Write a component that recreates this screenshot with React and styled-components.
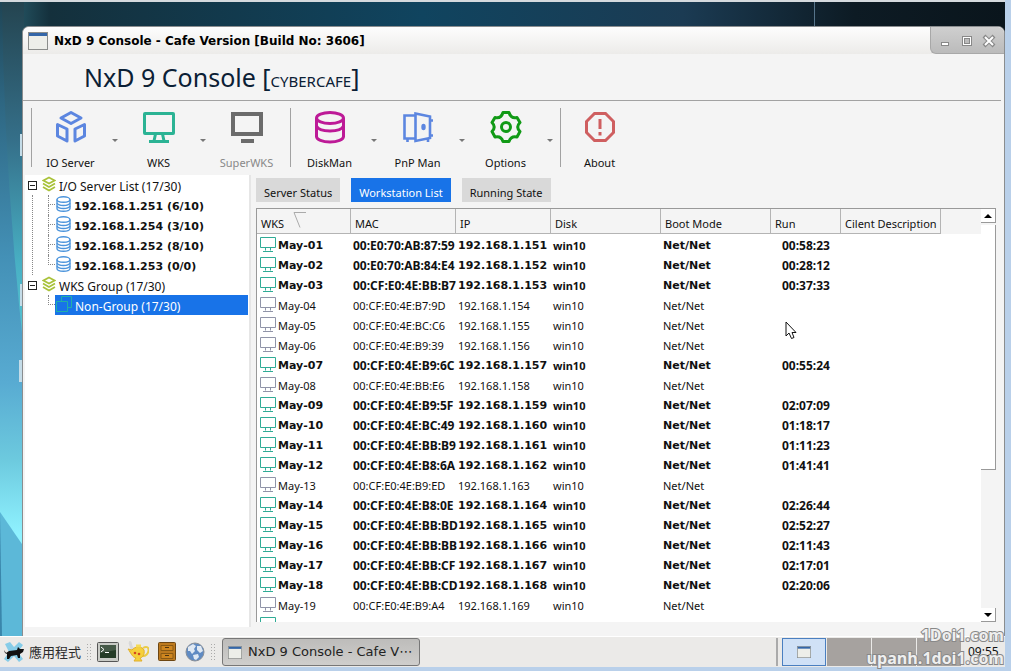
import styled, { createGlobalStyle } from "styled-components";

const GlobalStyle = createGlobalStyle`
  *,
  *::before,
  *::after {
    box-sizing: border-box;
  }

  html,
  body,
  #root {
    height: 100%;
    margin: 0;
  }

  body {
    overflow: hidden;
    background: #b9d0ea;
    font-family: "Noto Sans", sans-serif;
    font-size: 11px;
    color: #111;
  }

  button {
    margin: 0;
    padding: 0;
    border: 0;
    background: none;
    font: inherit;
    color: inherit;
  }

  svg {
    display: block;
    flex: none;
  }
`;

const Screen = styled.div`
  display: flex;
  flex-direction: column;
  height: 100%;
  padding-bottom: 4px;
  position: relative;
`;

const Desktop = styled.div`
  flex: 1;
  min-height: 0;
  margin-right: 6px;
  padding: 24px 0 0 22px;
  display: flex;
  position: relative;
  border-top: 2px solid #d5dade;
  background: linear-gradient(90deg, #2c6474 0%, #14303c 5%, #10445f 42%, #1b3b53 68%, #0d1b24 85%, #0a151c 100%);
`;

const Wallpaper = styled.svg`
  position: absolute;
  left: 0;
  top: 0;
  width: 24px;
  height: 100%;
`;

const SkyLine = styled.span`
  position: absolute;
  left: 81%;
  top: 0;
  width: 1px;
  height: 24px;
  background: #56748a;
`;

const Window = styled.main`
  flex: 1;
  min-width: 0;
  display: flex;
  flex-direction: column;
  position: relative;
  overflow: hidden;
  border: 1px solid #8a8d8f;
  border-bottom: 0;
  border-radius: 7px 7px 0 0;
  background: #f4f4f4;
`;

const TitleBar = styled.header`
  display: flex;
  align-items: center;
  height: 27px;
  padding-left: 5px;
  background: linear-gradient(#fdfdfd, #ecebe9);
`;

const Title = styled.h1`
  flex: 1;
  margin: 0 0 0 6px;
  font: bold 12px/16px "DejaVu Sans", sans-serif;
  color: #000;
`;

const WindowButtons = styled.div`
  display: flex;
  align-self: stretch;
  align-items: center;
  justify-content: center;
  gap: 6px;
  width: 74px;
  padding: 2px 2px 0 0;
  border-left: 1px solid #a8a8a8;
  border-bottom: 1px solid #a8a8a8;
  border-bottom-left-radius: 6px;
  background: linear-gradient(#cfcfcf, #bbb);
`;

const Banner = styled.div`
  height: 47px;
  margin-right: 3px;
  padding-left: 61px;
  border-bottom: 1px solid #a2a2a2;
  font: 25px/46px "Noto Sans", sans-serif;
  color: #0b2035;

  small {
    font-size: 15px;
  }
`;

const Toolbar = styled.nav`
  display: flex;
  height: 74px;
  padding: 7px 0 8px 8px;
`;

const ToolGroup = styled.div`
  display: flex;
  padding-right: 5px;
  border-left: 1px solid #a2a2a2;
`;

const Tool = styled.button`
  display: flex;
  flex-direction: column;
  align-items: center;
  gap: 13px;
  width: 77px;
  padding-top: 2px;
  line-height: 12px;
  white-space: nowrap;
  color: #111;

  &:disabled {
    color: #888;
  }
`;

const ToolMenu = styled.button`
  width: 11px;
  display: flex;
  align-items: center;
  justify-content: center;
  padding-top: 6px;

  &::after {
    content: "";
    border: 3px solid transparent;
    border-top-color: #777;
    border-bottom: 0;
  }
`;

const Body = styled.div`
  flex: 1;
  display: flex;
  min-height: 0;
`;

const Tree = styled.aside`
  width: 226px;
  flex: none;
  margin: 0 5px 9px 2px;
  border-right: 2px solid #e6e6e6;
  background: #fff;
`;

const TreeItem = styled.div`
  display: flex;
  flex: 1;
  align-items: center;
  height: 20px;
  margin: 0 1px 0 ${(props) => (props.$leaf ? 0 : 3)}px;
  padding-left: ${(props) => (props.$leaf ? 1 : 0)}px;
  white-space: nowrap;
  font: ${(props) => (props.$bold ? 'bold 11px "DejaVu Sans"' : '12px "Noto Sans"')}, sans-serif;
  color: ${(props) => (props.$selected ? "#fff" : "#111")};
  background: ${(props) => (props.$selected ? "#1873e8" : "none")};

  svg {
    margin-top: -3px;
  }

  span {
    margin-left: 3px;
    padding-top: 2px;
  }
`;

const TreeBranch = styled.div`
  margin-left: 7px;
  border-left: ${(props) => (props.$open ? "1px dotted #888" : "1px solid transparent")};
`;

const Leaf = styled.div`
  display: flex;
  padding-left: 15px;
`;

const Stub = styled.i`
  width: 7px;

  &::before,
  &::after {
    content: "";
    display: block;
    height: 10px;
    border-left: 1px dotted #888;
  }

  &::before {
    border-bottom: 1px dotted #888;
  }

  ${Leaf}:last-child &::after {
    border: 0;
  }
`;

const Twisty = styled.button`
  width: 9px;
  height: 9px;
  margin-right: 5px;
  border: 1px solid #222;
  display: grid;
  place-items: center;

  &::after {
    content: "";
    width: 5px;
    height: 1px;
    background: #222;
  }
`;

const Content = styled.section`
  flex: 1;
  min-width: 0;
  display: flex;
  flex-direction: column;
  padding: 3px 8px 14px 0;
`;

const Tabs = styled.div`
  display: flex;
  gap: 11px;
  margin-bottom: 6px;
`;

const Tab = styled.button`
  height: 24px;
  padding: 6px 8px 0;
  line-height: 16px;
  white-space: nowrap;
  color: ${(props) => (props.$active ? "#fff" : "#111")};
  background: ${(props) => (props.$active ? "#1873e8" : "#d9d9d9")};
`;

const ListBox = styled.div`
  flex: 1;
  min-height: 0;
  display: flex;
  border-top: 1px solid #999;
  border-left: 1px solid #999;
  background: #fff;
`;

const ListBody = styled.div`
  flex: 1;
  min-width: 0;
  overflow: hidden;
`;

const Table = styled.table`
  width: 100%;
  table-layout: fixed;
  border-collapse: separate;
  border-spacing: 0;
`;

const HeadCell = styled.th`
  width: ${(props) => (props.$width ? props.$width + "px" : "auto")};
  height: 25px;
  padding: 5px 0 0 4px;
  text-align: left;
  font-weight: normal;
  line-height: 14px;
  white-space: nowrap;
  background: #f4f4f4;
  border-right: ${(props) => (props.$width ? "1px solid #b4b4b4" : "0")};
  border-bottom: ${(props) => (props.$width ? "1px solid #b4b4b4" : "0")};

  svg {
    display: inline-block;
    margin: -9px 0 0 9px;
    vertical-align: middle;
  }
`;

const boldFonts = {
  wide: '11px "DejaVu Sans", sans-serif',
  digits: '12px "Noto Sans", sans-serif',
  plain: '11px "Noto Sans", sans-serif',
};

const Cell = styled.td`
  height: 20px;
  padding: 4px 0 0 ${(props) => props.$indent ?? 2}px;
  font: ${(props) => (props.$online ? "bold " + boldFonts[props.$face] : boldFonts.plain)};
  line-height: 16px;
  white-space: nowrap;
`;

const Station = styled.span`
  display: flex;
  align-items: center;
  gap: 2px;
  height: 16px;

  svg {
    margin-top: -4px;
  }
`;

const Scroll = styled.div`
  width: 15px;
  display: flex;
  flex-direction: column;
  background: #f4f4f4;
`;

const ScrollButton = styled.button`
  height: 14px;
  display: grid;
  place-items: center;
  background: #fff;
  border-right: 1px solid #999;
  border-bottom: 1px solid #999;
`;

const ScrollTrack = styled.div`
  flex: 1;
  padding-top: 2px;
`;

const ScrollThumb = styled.div`
  height: 64%;
  background: #fff;
  border-right: 1px solid #999;
  border-bottom: 1px solid #999;
`;

const Taskbar = styled.footer`
  height: 31px;
  margin-right: 6px;
  padding-left: 3px;
  display: flex;
  align-items: center;
  border-top: 1px solid #fff;
  background: #ebeae8;
  color: #2b2b2b;
`;

const AppsButton = styled.button`
  display: flex;
  align-items: center;
  gap: 4px;
  font: 13px/20px "Noto Sans CJK TC", sans-serif;
  white-space: nowrap;
`;

const Grip = styled.span`
  width: 5px;
  height: 18px;
  margin: 0 6px 0 5px;
  background: radial-gradient(circle, #aaa 1px, transparent 1px) 0 0 / 3px 3px;
`;

const Launcher = styled.button`
  margin-right: 8px;
`;

const TaskButton = styled.button`
  display: flex;
  align-items: center;
  gap: 6px;
  width: 198px;
  height: 28px;
  margin-left: 1px;
  padding-left: 5px;
  border: 1px solid #777;
  border-radius: 3px;
  background: linear-gradient(#bdbcba, #cfcecc);
  font: 13px/20px "DejaVu Sans", sans-serif;
  white-space: nowrap;
  color: #222;
`;

const Workspaces = styled.div`
  display: flex;
  gap: 1px;
  height: 28px;
  margin-left: auto;
  padding-left: 4px;
  border-left: 2px solid #aaa;
`;

const Workspace = styled.button`
  width: 44px;
  display: grid;
  place-items: center;
  border: ${(props) => (props.$active ? "1px solid #4a7fc0" : "0")};
  background: ${(props) => (props.$active ? "#d0e1f6" : "#a6a29f")};
`;

const Clock = styled.time`
  width: 44px;
  padding-left: 7px;
  font: 12px/16px "Noto Sans", sans-serif;
  color: #111;
`;

const Watermark = styled.div`
  position: absolute;
  right: 7px;
  bottom: 1px;
  text-align: right;
  font: bold 16px/23px "Open Sans", sans-serif;
  color: #eee;
  -webkit-text-stroke: 2px #888;
  paint-order: stroke fill;
  pointer-events: none;
`;

const Pointer = styled.svg`
  position: absolute;
  left: 785px;
  top: 321px;
`;

function DesktopArt() {
  return (
    <Wallpaper viewBox="0 0 24 634" preserveAspectRatio="none">
      <defs>
        <linearGradient id="sea" x2="0" y2="1">
          <stop offset="0" stopColor="#1f4555" />
          <stop offset=".15" stopColor="#2d6580" />
          <stop offset=".4" stopColor="#4390b6" />
          <stop offset=".6" stopColor="#58abd2" />
          <stop offset=".72" stopColor="#6cc9de" />
          <stop offset=".84" stopColor="#8ff2ff" />
        </linearGradient>
        <linearGradient id="beam" x2="0" y2="1">
          <stop offset="0" stopColor="#244450" />
          <stop offset=".4" stopColor="#35708a" />
          <stop offset=".75" stopColor="#48b0c4" />
          <stop offset="1" stopColor="#5cc9d6" />
        </linearGradient>
      </defs>
      <path d="M0 0H24V634H0Z" fill="url(#sea)" />
      <path d="M2 0H24V350Q4 170 2 0Z" fill="url(#beam)" />
      <path d="M0 510 24 545V634H0Z" fill="#5cb8d8" />
      <path d="M0 510 2 634H0Z" fill="#3a86ab" />
      <path d="M20 132H24V154H20ZM20 282H24V304H20ZM19 358H24V380H19Z" fill="#c4dce8" />
    </Wallpaper>
  );
}

function CubesIcon() {
  return (
    <svg width="32" height="34" viewBox="0 0 32 34" fill="none" stroke="#5c86e0" strokeWidth="3" strokeLinejoin="round">
      <path d="M16 2.5 26 8 16 13.5 6 8Z" />
      <path d="M2.5 14.5 12 19V31L2.5 26Z" />
      <path d="M29.5 14.5 20 19V31L29.5 26Z" />
    </svg>
  );
}

function MonitorIcon() {
  return (
    <svg width="34" height="34" viewBox="0 0 34 34" fill="none" stroke="#2bb394" strokeWidth="3">
      <rect x="2.5" y="3.5" width="29" height="20" rx="0.5" />
      <path d="M13.5 24 12 31M20.5 24 22 31M7 31.5H27" />
    </svg>
  );
}

function SuperIcon() {
  return (
    <svg width="34" height="34" viewBox="0 0 34 34" fill="#6b6b6b">
      <path fillRule="evenodd" d="M1 2H33V26H1ZM5 6V22H29V6Z" />
      <path d="M11 29H24V33H11Z" />
    </svg>
  );
}

function DiskIcon() {
  return (
    <svg width="34" height="34" viewBox="0 0 34 34" fill="none" stroke="#bd1a97" strokeWidth="3">
      <ellipse cx="17" cy="8" rx="13.5" ry="5.5" />
      <path d="M3.5 8V26.5C3.5 29.5 9.5 32 17 32S30.5 29.5 30.5 26.5V8" />
      <path d="M3.5 16C5 19.5 10 21 17 21S29 19.5 30.5 16" />
    </svg>
  );
}

function DoorIcon() {
  return (
    <svg width="34" height="34" viewBox="0 0 34 34" fill="none" stroke="#5c86e0" strokeWidth="2.6">
      <path d="M14 5.5H3.5V28.5H14M14.5 3.5 29 6.5V28L14.5 31ZM6.5 29V32M27 29V32M29 10.5H32M29 25.5H32" />
      <ellipse cx="22.5" cy="17" rx="2.2" ry="3.2" fill="#5c86e0" stroke="none" />
    </svg>
  );
}

function GearIcon() {
  return (
    <svg width="34" height="34" viewBox="0 0 34 34" fill="none" stroke="#119a16" strokeWidth="3" strokeLinejoin="round">
      <path d="M14 2.5H20Q22 9 28 7.5L31 12.5Q26.5 17 31 21.5L28 27Q22 25.5 20 31.5H14Q12 25.5 6 27L3 21.5Q7.5 17 3 12.5L6 7.5Q12 9 14 2.5Z" />
      <circle cx="17" cy="17" r="4.5" />
    </svg>
  );
}

function AlertIcon() {
  return (
    <svg width="34" height="34" viewBox="0 0 34 34" fill="none" stroke="#cf5f60" strokeWidth="3">
      <path d="M11.5 3.5H22.5L30.5 11.5V22.5L22.5 30.5H11.5L3.5 22.5V11.5Z" />
      <path d="M17 9V19M17 22V25.5" />
    </svg>
  );
}

function LayersIcon() {
  return (
    <svg width="14" height="16" viewBox="0 0 14 16" fill="none" stroke="#a9c23a" strokeWidth="1.7">
      <path d="M7 1.5 12.5 4.5 7 7.5 1.5 4.5Z" />
      <path d="M1 7.5 7 11 13 7.5M1 11 7 14.5 13 11" />
    </svg>
  );
}

function ServerIcon() {
  return (
    <svg width="15" height="16" viewBox="0 0 15 16" fill="none" stroke="#4d95dc" strokeWidth="1.4">
      <ellipse cx="7.5" cy="3.5" rx="6.5" ry="2.7" />
      <path d="M1 3.5V12.5C1 14.2 4 15.2 7.5 15.2S14 14.2 14 12.5V3.5" />
      <path d="M1 7C2 9 5 9.5 7.5 9.5S13 9 14 7M1 10C2 12 5 12.5 7.5 12.5S13 12 14 10" />
    </svg>
  );
}

function GroupIcon() {
  return (
    <svg width="16" height="16" viewBox="0 0 16 16" fill="none" stroke="#20b0a8">
      <path d="M.5 5.5H11.5V15.5H.5ZM5.5 5V.5H15.5V11.5H12" />
    </svg>
  );
}

function StationIcon({ online }) {
  const color = online ? "#2fab95" : "#9094a8";

  return (
    <svg width="16" height="16" viewBox="0 0 16 16" fill="none" stroke={color}>
      <path d="M.5 1.5H15.5V11.5H.5ZM5.5 12V14.5M10.5 12V14.5M3 15.5H13" />
    </svg>
  );
}

function WindowIcon({ width = 16, height = 14 }) {
  return (
    <svg width={width} height={height} viewBox="0 0 20 18" preserveAspectRatio="none">
      <rect x=".5" y=".5" width="19" height="17" fill="#edeee9" stroke="#8b8d8b" />
      <path d="M1 1H19V4H1Z" fill="#3466a8" />
    </svg>
  );
}

function MouseIcon() {
  return (
    <svg width="22" height="22" viewBox="0 0 22 22">
      <path d="M2 3 7 1 11 6 16 1 20 4 15 11 20 18 16 21 11 15 5 21 1 18 6 11Z" fill="#86cce8" />
      <path d="M1 9 3 12 6 10 14 9 15 6 17 8 21 8 20 11 17 13 17 17H15L14 14 8 15 6 18H4L4 13 2 12Z" fill="#111" />
    </svg>
  );
}

function TerminalIcon() {
  return (
    <svg width="22" height="22" viewBox="0 0 22 22">
      <rect x=".5" y="1.5" width="21" height="19" rx="1" fill="#c9cbc6" stroke="#555" />
      <path d="M3 4H19V17H3Z" fill="#253c27" />
      <path d="M4 6 7 8.5 4 11M8 11.5H12" fill="none" stroke="#fff" />
      <path d="M3 4H19V9L3 12Z" fill="#fff" opacity=".15" />
    </svg>
  );
}

function LampIcon() {
  return (
    <svg width="22" height="22" viewBox="0 0 22 22">
      <path d="M2 1C5 2 2 5 6 8" fill="none" stroke="#d8d8d8" strokeWidth="3" />
      <path d="M16 7C24 2 23 16 15 15" fill="none" stroke="#eacb45" strokeWidth="2" />
      <path d="M1 8 5 9C8 5 15 5 17 9 18 14 15 17 13 17L15 20H7L9 17C5 16 4 12 1 8Z" fill="#f6d03a" stroke="#e0ae2c" />
      <circle cx="8" cy="12" r="1.3" fill="#d44b20" />
      <circle cx="12" cy="13" r="1.3" fill="#d44b20" />
      <path d="M9 5H14" stroke="#f5da55" strokeWidth="3" />
    </svg>
  );
}

function CabinetIcon() {
  return (
    <svg width="20" height="22" viewBox="0 0 20 22">
      <rect x="1.5" y="1.5" width="17" height="18" rx="1" fill="#bd7a1f" stroke="#6d4612" />
      <path d="M4 4.5H16V9.5H4ZM4 12.5H16V17.5H4Z" fill="#cf861f" stroke="#8a5a14" />
      <path d="M8 6.5H12M8 14.5H12" stroke="#50340f" />
    </svg>
  );
}

function GlobeIcon() {
  return (
    <svg width="20" height="20" viewBox="0 0 20 20">
      <circle cx="10" cy="10" r="9" fill="#608bc3" stroke="#888f98" />
      <path d="M3 5 8 2 11 4 9 7 10 9 7 12 5 9 3 9ZM12 4 16 4 18 9 15 11 12 8ZM8 13 13 12 14 15 11 18 9 17Z" fill="#e0e9f3" />
    </svg>
  );
}

const ioTools = [
  { label: "IO Server", icon: <CubesIcon />, menu: true },
  { label: "WKS", icon: <MonitorIcon />, menu: true },
  { label: "SuperWKS", icon: <SuperIcon />, disabled: true },
];

const manageTools = [
  { label: "DiskMan", icon: <DiskIcon />, menu: true },
  { label: "PnP Man", icon: <DoorIcon />, menu: true },
  { label: "Options", icon: <GearIcon />, menu: true },
];

const aboutTools = [{ label: "About", icon: <AlertIcon /> }];

const servers = [
  "192.168.1.251 (6/10)",
  "192.168.1.254 (3/10)",
  "192.168.1.252 (8/10)",
  "192.168.1.253 (0/0)",
];

const columns = [
  ["WKS", 94],
  ["MAC", 105],
  ["IP", 95],
  ["Disk", 110],
  ["Boot Mode", 110],
  ["Run", 70],
  ["Cilent Description", 100],
  ["", 0],
];

const stations = [
  ["00:E0:70:AB:87:59", "00:58:23"],
  ["00:E0:70:AB:84:E4", "00:28:12"],
  ["00:CF:E0:4E:BB:B7", "00:37:33"],
  ["00:CF:E0:4E:B7:9D"],
  ["00:CF:E0:4E:BC:C6"],
  ["00:CF:E0:4E:B9:39"],
  ["00:CF:E0:4E:B9:6C", "00:55:24"],
  ["00:CF:E0:4E:BB:E6"],
  ["00:CF:E0:4E:B9:5F", "02:07:09"],
  ["00:CF:E0:4E:BC:49", "01:18:17"],
  ["00:CF:E0:4E:BB:B9", "01:11:23"],
  ["00:CF:E0:4E:B8:6A", "01:41:41"],
  ["00:CF:E0:4E:B9:ED"],
  ["00:CF:E0:4E:B8:0E", "02:26:44"],
  ["00:CF:E0:4E:BB:BD", "02:52:27"],
  ["00:CF:E0:4E:BB:BB", "02:11:43"],
  ["00:CF:E0:4E:BB:CF", "02:17:01"],
  ["00:CF:E0:4E:BB:CD", "02:20:06"],
  ["00:CF:E0:4E:B9:A4"],
];

function Tools({ items }) {
  return (
    <ToolGroup>
      {items.map((item) => [
        <Tool key={item.label} disabled={item.disabled}>
          {item.icon}
          <span>{item.label}</span>
        </Tool>,
        item.menu && <ToolMenu key={item.label + "-menu"} aria-label={item.label + " menu"} />,
      ])}
    </ToolGroup>
  );
}

function ServerTree() {
  return (
    <Tree>
      <TreeItem>
        <Twisty aria-label="Collapse I/O Server List" />
        <LayersIcon />
        <span>I/O Server List (17/30)</span>
      </TreeItem>
      <TreeBranch $open>
        {servers.map((server) => (
          <Leaf key={server}>
            <Stub />
            <TreeItem $leaf $bold>
              <ServerIcon />
              <span>{server}</span>
            </TreeItem>
          </Leaf>
        ))}
      </TreeBranch>
      <TreeItem>
        <Twisty aria-label="Collapse WKS Group" />
        <LayersIcon />
        <span>WKS Group (17/30)</span>
      </TreeItem>
      <TreeBranch>
        <Leaf>
          <Stub />
          <TreeItem $leaf $selected>
            <GroupIcon />
            <span>Non-Group (17/30)</span>
          </TreeItem>
        </Leaf>
      </TreeBranch>
    </Tree>
  );
}

function StationRow({ index, mac, run }) {
  const online = Boolean(run);

  return (
    <tr>
      <Cell $online={online} $face="wide" $indent={3}>
        <Station>
          <StationIcon online={online} />
          May-{String(index + 1).padStart(2, "0")}
        </Station>
      </Cell>
      <Cell $online={online} $face="digits">{mac}</Cell>
      <Cell $online={online} $face="wide">192.168.1.{151 + index}</Cell>
      <Cell $online={online} $face="plain">win10</Cell>
      <Cell $online={online} $face="wide">Net/Net</Cell>
      <Cell $online={online} $face="digits" $indent={11}>{run}</Cell>
      <Cell />
      <Cell />
    </tr>
  );
}

function App() {
  return (
    <Screen>
      <GlobalStyle />
      <Desktop>
        <DesktopArt />
        <SkyLine />
        <Window>
          <TitleBar>
            <WindowIcon width={20} height={18} />
            <Title>NxD 9 Console - Cafe Version [Build No: 3606]</Title>
            <WindowButtons>
              <button aria-label="Minimize">
                <svg width="16" height="16" viewBox="0 0 16 16">
                  <rect x="4.5" y="9.5" width="7" height="3" fill="#fff" stroke="#888" />
                </svg>
              </button>
              <button aria-label="Maximize">
                <svg width="16" height="16" viewBox="0 0 16 16" fill="none">
                  <rect x="3.5" y="3.5" width="9" height="9" fill="#fff" stroke="#888" />
                  <rect x="5.5" y="5.5" width="5" height="5" fill="#bbb" stroke="#888" />
                </svg>
              </button>
              <button aria-label="Close">
                <svg width="16" height="16" viewBox="0 0 16 16" fill="none">
                  <path d="M3 3 13 13M13 3 3 13" stroke="#888" strokeWidth="4" />
                  <path d="M4 4 12 12M12 4 4 12" stroke="#fff" strokeWidth="2" />
                </svg>
              </button>
            </WindowButtons>
          </TitleBar>
          <Banner>
            NxD 9 Console [<small>CYBERCAFE</small>]
          </Banner>
          <Toolbar>
            <Tools items={ioTools} />
            <Tools items={manageTools} />
            <Tools items={aboutTools} />
          </Toolbar>
          <Body>
            <ServerTree />
            <Content>
              <Tabs>
                <Tab>Server Status</Tab>
                <Tab $active>Workstation List</Tab>
                <Tab>Running State</Tab>
              </Tabs>
              <ListBox>
                <ListBody>
                  <Table>
                    <thead>
                      <tr>
                        {columns.map(([name, width]) => (
                          <HeadCell key={name} $width={width}>
                            {name}
                            {name === "WKS" && (
                              <svg width="14" height="16" viewBox="0 0 14 16" fill="none" stroke="#aaa">
                                <path d="M13 .5H1L7 15.5" />
                              </svg>
                            )}
                          </HeadCell>
                        ))}
                      </tr>
                    </thead>
                    <tbody>
                      {stations.map(([mac, run], index) => (
                        <StationRow key={index} index={index} mac={mac} run={run} />
                      ))}
                      <tr>
                        <Cell $indent={3}>
                          <Station>
                            <StationIcon online />
                          </Station>
                        </Cell>
                      </tr>
                    </tbody>
                  </Table>
                </ListBody>
                <Scroll>
                  <ScrollButton aria-label="Scroll up">
                    <svg width="8" height="4" viewBox="0 0 8 4">
                      <path d="M0 4 4 0 8 4Z" />
                    </svg>
                  </ScrollButton>
                  <ScrollTrack>
                    <ScrollThumb />
                  </ScrollTrack>
                  <ScrollButton aria-label="Scroll down">
                    <svg width="8" height="4" viewBox="0 0 8 4">
                      <path d="M0 0H8L4 4Z" />
                    </svg>
                  </ScrollButton>
                </Scroll>
              </ListBox>
            </Content>
          </Body>
        </Window>
      </Desktop>
      <Taskbar>
        <AppsButton>
          <MouseIcon />
          應用程式
        </AppsButton>
        <Grip />
        <Launcher aria-label="Terminal">
          <TerminalIcon />
        </Launcher>
        <Launcher aria-label="Genie">
          <LampIcon />
        </Launcher>
        <Launcher aria-label="Files">
          <CabinetIcon />
        </Launcher>
        <button aria-label="Browser">
          <GlobeIcon />
        </button>
        <Grip />
        <TaskButton>
          <WindowIcon width={14} height={13} />
          NxD 9 Console - Cafe V⋯
        </TaskButton>
        <Workspaces>
          <Workspace $active aria-label="Workspace 1">
            <WindowIcon width={14} height={12} />
          </Workspace>
          <Workspace aria-label="Workspace 2" />
          <Workspace aria-label="Workspace 3" />
          <Workspace aria-label="Workspace 4" />
        </Workspaces>
        <Clock>09:55</Clock>
      </Taskbar>
      <Watermark>
        1Doi1.com
        <br />
        upanh.1doi1.com
      </Watermark>
      <Pointer width="12" height="19" viewBox="0 0 12 19">
        <path d="M1 1V15L4 12 6.5 17.5 9 16.5 7 11.5H11Z" fill="#fff" stroke="#111" />
      </Pointer>
    </Screen>
  );
}

export default App;
